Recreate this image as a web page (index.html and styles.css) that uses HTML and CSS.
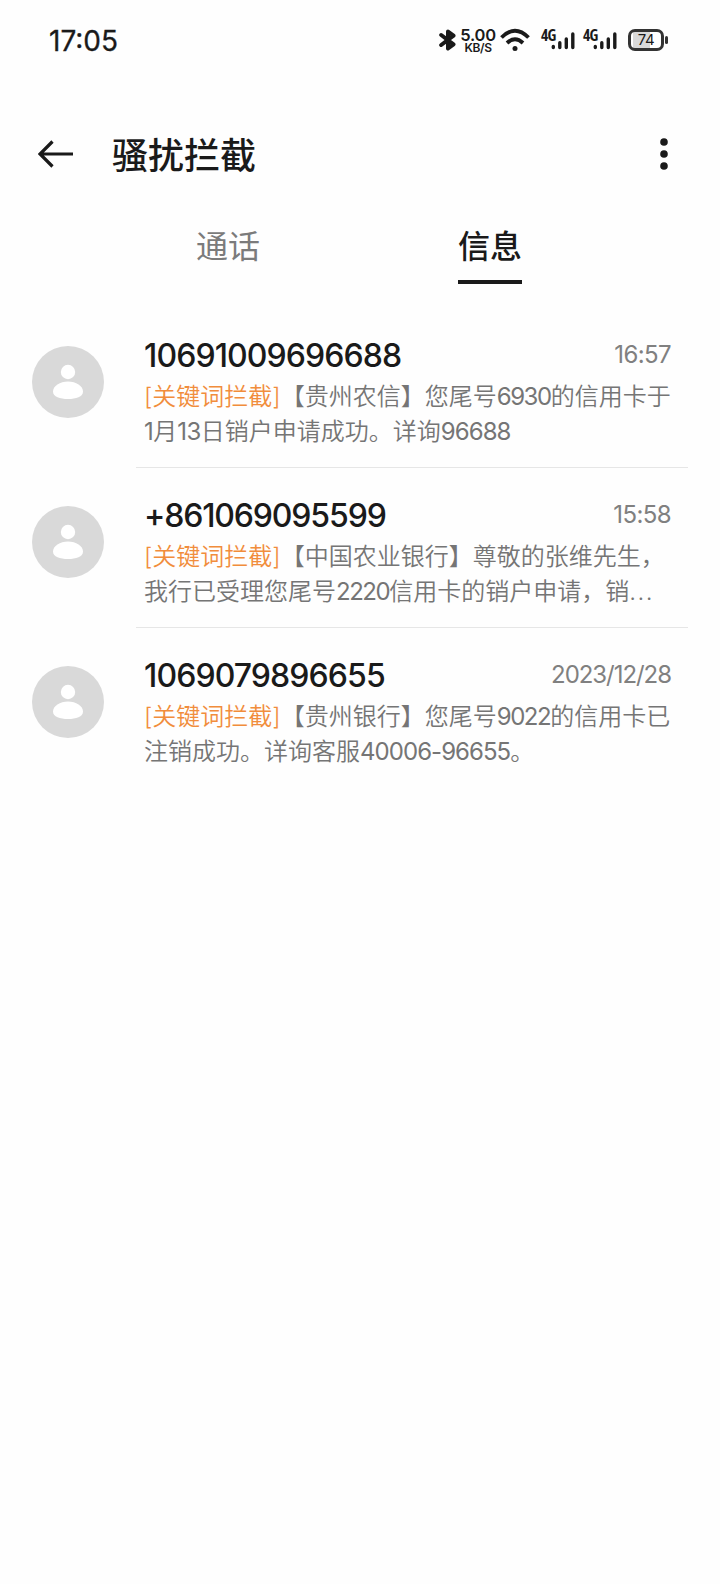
FILE: index.html
```html
<!DOCTYPE html>
<html lang="zh-CN">
<head>
<meta charset="utf-8">
<title>骚扰拦截</title>
<link rel="stylesheet" href="styles.css">
</head>
<body>
<header class="status">
  <span class="clock">17:05</span>
  <div class="indicators">
    <svg class="bluetooth" width="18" height="24" viewBox="0 0 18 24"><path d="M2.200 7 14.500 16.300 9 20.500V3.500L14.500 7.700 2.200 17" fill="none" stroke="#1a1a1a" stroke-width="4" stroke-linejoin="round" stroke-linecap="round"/></svg>
    <span class="speed"><b>5.00</b><i>KB/S</i></span>
    <svg class="wifi" width="30" height="24" viewBox="0 0 30 24"><g fill="none" stroke="#1a1a1a" stroke-width="3.800"><path d="M1.500 9.500Q15-4 28.500 9.500"/><path d="M7 15Q15 7.500 23 15"/></g><circle cx="15" cy="20.500" r="2.500" fill="#1a1a1a"/></svg>
    <span class="signal"><em>4G</em><svg width="24" height="18" viewBox="0 0 24 18"><path d="M2.300 14.500v1M8.800 10.800v4.800M15.300 7v8.600M21.800 2v13.600" fill="none" stroke="#1a1a1a" stroke-width="3.400" stroke-linecap="round"/></svg></span>
    <span class="signal"><em>4G</em><svg width="24" height="18" viewBox="0 0 24 18"><path d="M2.300 14.500v1M8.800 10.800v4.800M15.300 7v8.600M21.800 2v13.600" fill="none" stroke="#1a1a1a" stroke-width="3.400" stroke-linecap="round"/></svg></span>
    <span class="battery"><span class="level">74</span></span>
  </div>
</header>
<nav class="appbar">
  <svg width="36" height="28" viewBox="0 0 36 28"><path d="M14.500 1.500 2 14l12.500 12.500M2.500 14H35" fill="none" stroke="#1a1a1a" stroke-width="3.200"/></svg>
  <h1>骚扰拦截</h1>
  <svg class="more" width="8" height="32" viewBox="0 0 8 32" fill="#1a1a1a"><circle cx="4" cy="4" r="3.800"/><circle cx="4" cy="16" r="3.800"/><circle cx="4" cy="28" r="3.800"/></svg>
</nav>
<div class="tabs">
  <span class="tab">通话</span>
  <span class="tab active">信息</span>
</div>
<main>
  <article class="row">
    <svg class="avatar" viewBox="0 0 72 72"><circle cx="36" cy="36" r="36" fill="#d9d9d9"/><circle cx="36" cy="26" r="7.200" fill="#fff"/><path d="M21 45.500C21 40 28 35.500 36 35.500S51 40 51 45.500C51 51 44 53 36 53S21 51 21 45.500Z" fill="#fff"/></svg>
    <div class="body">
      <div class="head"><h2>10691009696688</h2><time>16:57</time></div>
      <p><mark>[关键词拦截]</mark>【贵州农信】您尾号<span class="num">6930</span>的信用卡于<br><span class="num one">1</span>月<span class="num one">13</span>日销户申请成功。详询<span class="num wide">96688</span></p>
    </div>
  </article>
  <article class="row">
    <svg class="avatar" viewBox="0 0 72 72"><circle cx="36" cy="36" r="36" fill="#d9d9d9"/><circle cx="36" cy="26" r="7.200" fill="#fff"/><path d="M21 45.500C21 40 28 35.500 36 35.500S51 40 51 45.500C51 51 44 53 36 53S21 51 21 45.500Z" fill="#fff"/></svg>
    <div class="body">
      <div class="head"><h2 class="intl">+861069095599</h2><time>15:58</time></div>
      <p><mark>[关键词拦截]</mark>【中国农业银行】尊敬的张维先生，<br>我行已受理您尾号<span class="num">2220</span>信用卡的销户申请，销<span class="dots">...</span></p>
    </div>
  </article>
  <article class="row">
    <svg class="avatar" viewBox="0 0 72 72"><circle cx="36" cy="36" r="36" fill="#d9d9d9"/><circle cx="36" cy="26" r="7.200" fill="#fff"/><path d="M21 45.500C21 40 28 35.500 36 35.500S51 40 51 45.500C51 51 44 53 36 53S21 51 21 45.500Z" fill="#fff"/></svg>
    <div class="body">
      <div class="head"><h2>1069079896655</h2><time class="date">2023/12/28</time></div>
      <p><mark>[关键词拦截]</mark>【贵州银行】您尾号<span class="num">9022</span>的信用卡已<br>注销成功。详询客服<span class="num wide">40006-96655</span>。</p>
    </div>
  </article>
</main>
</body>
</html>
```
FILE: styles.css
```css
* { box-sizing: border-box; }
body {
  margin: 0;
  background: #fefefe;
  color: #1a1a1a;
  font-family: Inter, "Noto Sans CJK SC", sans-serif;
}
h1, h2, p { margin: 0; font-weight: 500; }
svg { display: block; flex: none; }
.status {
  display: flex;
  justify-content: space-between;
  align-items: center;
  height: 80px;
  padding: 0 51px 0 49px;
}
.clock { font-size: 28px; line-height: 34px; font-weight: 400; padding-top: 2px; -webkit-text-stroke: 0.3px #1a1a1a; }
.indicators { display: flex; align-items: center; }
.speed {
  display: flex;
  flex-direction: column;
  align-items: center;
  width: 36px;
  margin: 1px 5px 0 3px;
}
.speed b { font-size: 16.500px; line-height: 14px; font-weight: 600; letter-spacing: -0.2px; }
.speed i { font-size: 12px; line-height: 12px; font-style: normal; font-weight: 600; letter-spacing: -0.4px; }
.signal { display: flex; align-items: flex-start; height: 20px; width: 42px; }
.signal svg { margin: 2px 0 0 -5px; }
.signal em { width: 15px; flex: none; font: 700 15.500px/11px "Open Sans", sans-serif; font-stretch: 75%; letter-spacing: -0.7px; }
.wifi { margin: 0 11px 0 -1px; }
.battery {
  position: relative;
  width: 36px;
  height: 22px;
  margin: 0 5px 0 3px;
  border: 3px solid #333;
  border-radius: 7px;
  background: linear-gradient(90deg, #fff 7%, #d9d9d9 7%, #d9d9d9 62%, #fff 62%);
}
.battery::after {
  content: "";
  position: absolute;
  right: -7px;
  top: 4px;
  width: 3px;
  height: 8px;
  border-radius: 2px;
  background: #333;
}
.level { display: block; text-align: center; font-size: 15px; line-height: 16px; letter-spacing: -0.5px; }
.appbar {
  display: flex;
  align-items: center;
  height: 68px;
  margin-top: 40px;
  padding: 0 52px 0 38px;
}
h1 { margin-left: 38px; font-size: 36px; line-height: 52px; padding-top: 3px; }
.more { margin-left: auto; }
.tabs {
  display: grid;
  grid-template-columns: 262px 262px;
  justify-content: center;
  justify-items: center;
  height: 104px;
  margin-left: -2px;
  padding-top: 34px;
}
.tab { height: 62px; padding-top: 1px; font-size: 32px; line-height: 48px; color: #7b7b7b; }
.active { color: #1a1a1a; font-weight: 500; border-bottom: 4px solid #1a1a1a; }
.row { display: flex; height: 160px; padding: 54px 32px 0; }
.avatar { width: 72px; height: 72px; }
.body {
  flex: 1;
  height: 176px;
  margin: -54px 0 0 32px;
  padding: 43px 17px 0 8px;
  border-bottom: 1px solid #e6e6e6;
}
.row:last-child .body { border: 0; }
.head { display: flex; justify-content: space-between; align-items: center; height: 42px; }
h2 { font-size: 32px; line-height: 42px; letter-spacing: -0.900px; white-space: nowrap; }
.intl { letter-spacing: -1.150px; }
time { font-size: 24px; color: #808080; font-weight: 400; letter-spacing: -0.6px; padding-bottom: 3px; }
.date { letter-spacing: -1.050px; }
p { font-size: 24px; line-height: 34.500px; font-weight: 350; color: #757575; white-space: nowrap; padding-top: 3px; }
mark { background: none; color: #f18d3c; }
.num { font-weight: 400; letter-spacing: -1.450px; }
.wide { letter-spacing: -0.950px; }
.one { letter-spacing: -0.500px; }
.dots { letter-spacing: 1.500px; }
```
